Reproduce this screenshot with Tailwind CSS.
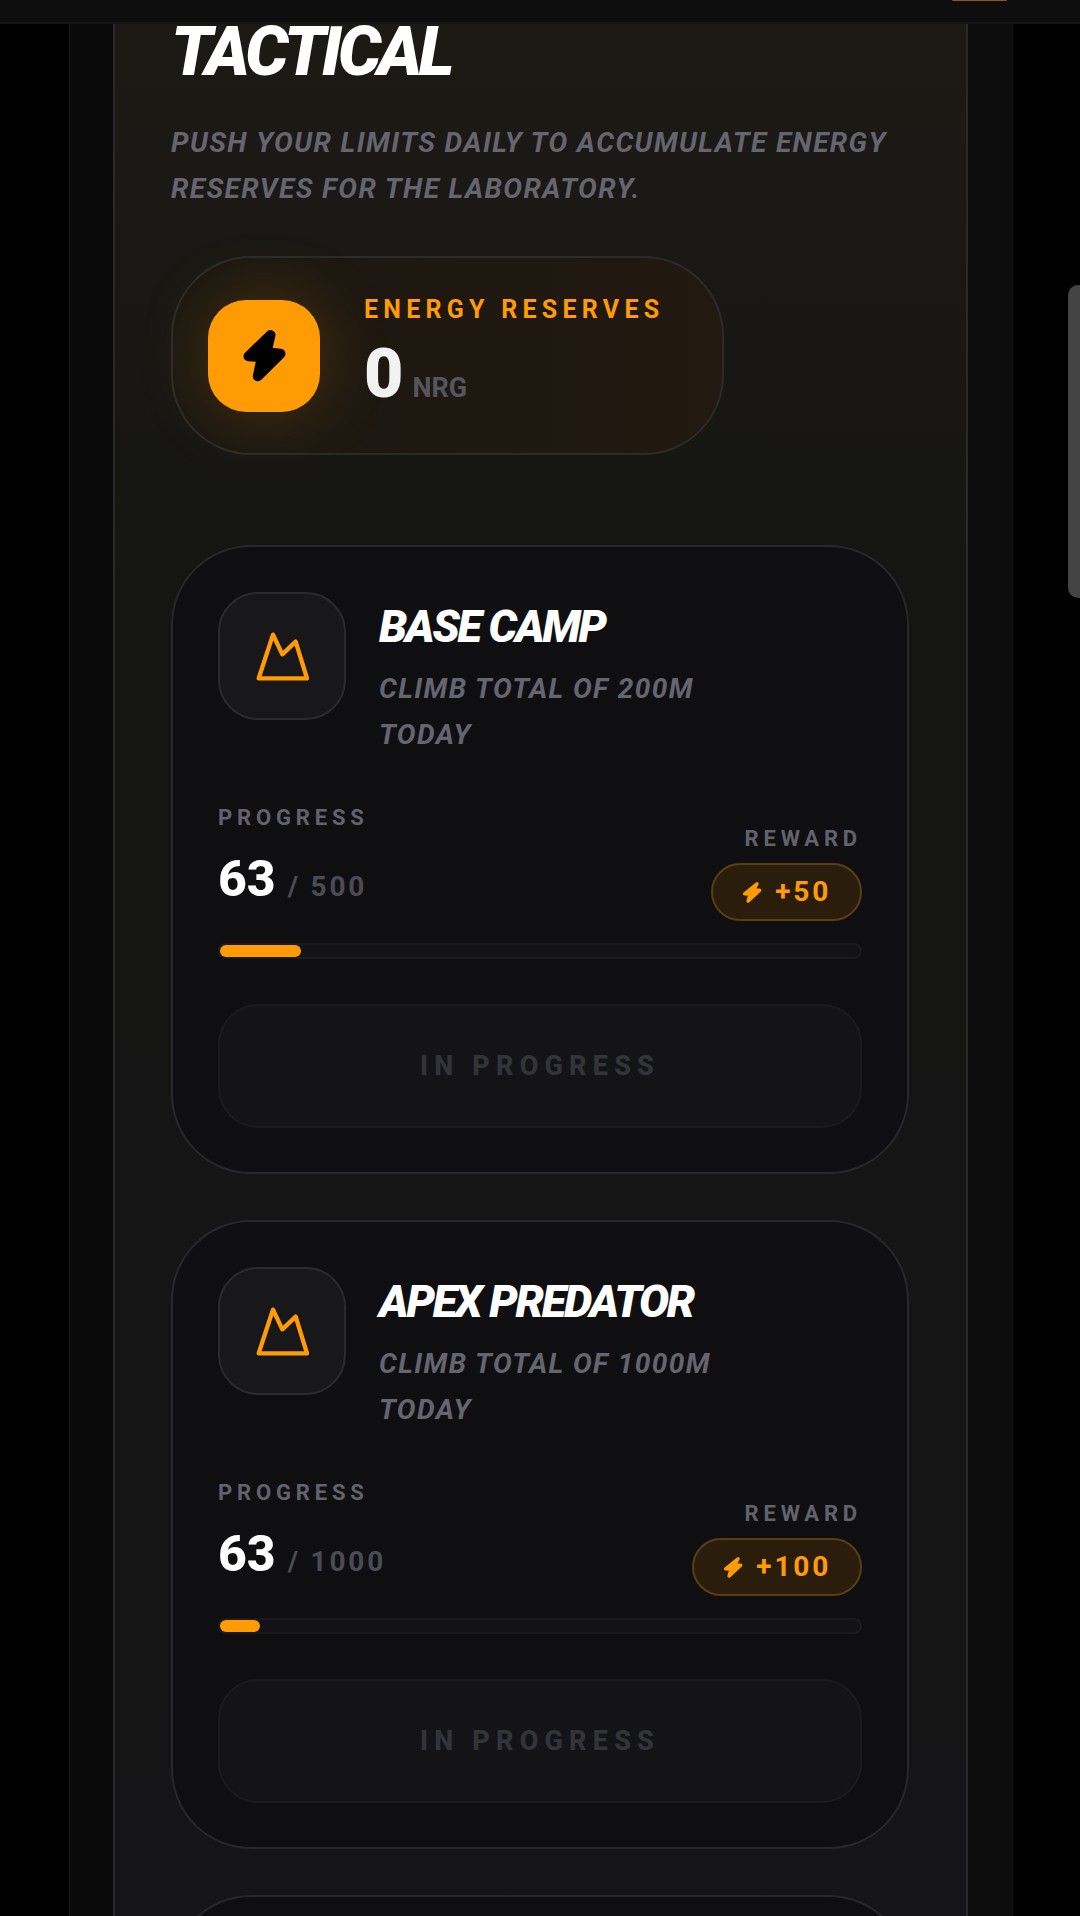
<!DOCTYPE html>
<html lang="en">
<head>
  <meta charset="UTF-8" />
  <meta name="viewport" content="width=device-width, initial-scale=1.0" />
  <title>Tactical</title>
  <script src="https://cdn.jsdelivr.net/npm/@tailwindcss/browser@4"></script>
</head>
<body class="bg-black h-[1916px] overflow-hidden font-['Roboto',sans-serif]">
  <!-- top bar -->
  <div class="relative h-[24px] bg-[#0e0e0e] border-b-2 border-[#161616]">
    <div class="absolute left-[952px] top-0 w-[55px] h-[1px] bg-[#8a5a14] rounded-b-full"></div>
  </div>

  <!-- side handle -->
  <div class="fixed right-0 top-[285px] w-[12px] h-[313px] bg-[#444444] rounded-l-[10px]"></div>

  <div class="w-[944px] ml-[69px] border-x border-[#161618] bg-gradient-to-r from-[#0a0a0b] to-[#0d0d0e] pl-[43px] pr-[44px]">
    <div class="w-[855px] h-[1892px] border-x-2 border-[#2a2a2c] bg-gradient-to-b from-[#1c1a15] via-[#151513] via-30% to-[#151517] pl-[56px]">

      <h1 class="text-[68px] leading-[50px] font-black italic text-white tracking-[-0.055em] pt-[3px]">TACTICAL</h1>
      <p class="mt-[43px] text-[28px] leading-[46px] font-bold italic text-[#65656f] tracking-[0.05em] w-[740px]">PUSH YOUR LIMITS DAILY TO ACCUMULATE ENERGY RESERVES FOR THE LABORATORY.</p>

      <!-- energy -->
      <div class="mt-[44px] w-[553px] h-[199px] rounded-[80px] border-2 border-[#2b2b2b] bg-gradient-to-r from-[#1a1711] to-[#221910] flex items-center pl-[35px]">
        <div class="w-[112px] h-[112px] rounded-[38px] bg-[#ff9c05] shadow-[0_0_70px_rgba(255,156,5,0.22)] flex items-center justify-center">
          <svg width="47" height="55" viewBox="150 145 140 165"><path d="M238 166 L172 230 L212 232 L200 290 L268 222 L226 218 Z" fill="#000" stroke="#000" stroke-width="30" stroke-linejoin="round"/></svg>
        </div>
        <div class="ml-[44px] pb-[8px]">
          <div class="text-[25px] leading-[32px] font-bold text-[#ff9c05] tracking-[0.21em]">ENERGY RESERVES</div>
          <div class="flex items-baseline mt-[12px]">
            <span class="text-[68px] leading-[72px] font-black text-[#f2f2f2]">0</span>
            <span class="ml-[9px] text-[27px] font-bold text-[#55555f]">NRG</span>
          </div>
        </div>
      </div>

      <!-- base camp -->
      <div class="mt-[90px] w-[738px] h-[629px] rounded-[80px] border-2 border-[#28282a] bg-[#0f0f11] px-[45px] pt-[45px]">
        <div class="flex">
          <div class="w-[128px] h-[128px] shrink-0 rounded-[40px] border-2 border-[#2b2b2d] bg-[#18181a] flex items-center justify-center">
            <svg class="mt-[2px]" width="56" height="52" viewBox="130 140 168 156"><path d="M144 282 L187 151 L215 210 L255 172 L289 282 Z" fill="none" stroke="#ff9c05" stroke-width="13" stroke-linejoin="round"/></svg>
          </div>
          <div class="ml-[33px]">
            <h2 class="text-[45px] leading-[50px] mt-[10px] font-black italic text-white tracking-[-0.05em]">BASE CAMP</h2>
            <p class="mt-[14px] w-[340px] text-[28px] leading-[46px] font-bold italic text-[#65656f] tracking-[0.05em]">CLIMB TOTAL OF 200M TODAY</p>
          </div>
        </div>
        <div class="flex justify-between items-end mt-[46px]">
          <div class="mb-[13px]">
            <div class="text-[22px] leading-[28px] font-bold text-[#62626c] tracking-[0.22em]">PROGRESS</div>
            <div class="flex items-baseline mt-[19px]">
              <span class="text-[50px] leading-[56px] font-extrabold text-white">63</span>
              <span class="ml-[12px] text-[28px] font-bold text-[#4b4b55] tracking-[0.1em]">/ 500</span>
            </div>
          </div>
          <div class="flex flex-col items-end">
            <div class="text-[22px] leading-[28px] font-bold text-[#62626c] tracking-[0.22em]">REWARD</div>
            <div class="mt-[10px] h-[58px] px-[29px] rounded-full border-2 border-[#5a3e12] bg-[#2a1d0c] flex items-center gap-[13px]">
              <svg width="20" height="23" viewBox="190 92 60 68"><path d="M235 100 L198 130 L214 131 L208 152 L243 119 L226 118 Z" fill="#ff9c05" stroke="#ff9c05" stroke-width="10" stroke-linejoin="round"/></svg>
              <span class="text-[28px] font-bold text-[#ff9c05] tracking-[0.1em]">+50</span>
            </div>
          </div>
        </div>
        <div class="mt-[22px] h-[16px] rounded-full border-2 border-[#1b1b1d] bg-[#131315]">
          <div class="h-full w-[12.6%] rounded-full bg-[#ff9c05]"></div>
        </div>
        <div class="mt-[45px] h-[124px] rounded-[40px] border-2 border-[#1b1b1e] bg-[#141417] flex items-center justify-center text-[27px] font-extrabold text-[#33333a] tracking-[0.23em]">IN PROGRESS</div>
      </div>

      <!-- apex predator -->
      <div class="mt-[46px] w-[738px] h-[629px] rounded-[80px] border-2 border-[#28282a] bg-[#0f0f11] px-[45px] pt-[45px]">
        <div class="flex">
          <div class="w-[128px] h-[128px] shrink-0 rounded-[40px] border-2 border-[#2b2b2d] bg-[#18181a] flex items-center justify-center">
            <svg class="mt-[2px]" width="56" height="52" viewBox="130 140 168 156"><path d="M144 282 L187 151 L215 210 L255 172 L289 282 Z" fill="none" stroke="#ff9c05" stroke-width="13" stroke-linejoin="round"/></svg>
          </div>
          <div class="ml-[33px]">
            <h2 class="text-[45px] leading-[50px] mt-[10px] font-black italic text-white tracking-[-0.05em]">APEX PREDATOR</h2>
            <p class="mt-[14px] w-[340px] text-[28px] leading-[46px] font-bold italic text-[#65656f] tracking-[0.05em]">CLIMB TOTAL OF 1000M TODAY</p>
          </div>
        </div>
        <div class="flex justify-between items-end mt-[46px]">
          <div class="mb-[13px]">
            <div class="text-[22px] leading-[28px] font-bold text-[#62626c] tracking-[0.22em]">PROGRESS</div>
            <div class="flex items-baseline mt-[19px]">
              <span class="text-[50px] leading-[56px] font-extrabold text-white">63</span>
              <span class="ml-[12px] text-[28px] font-bold text-[#4b4b55] tracking-[0.1em]">/ 1000</span>
            </div>
          </div>
          <div class="flex flex-col items-end">
            <div class="text-[22px] leading-[28px] font-bold text-[#62626c] tracking-[0.22em]">REWARD</div>
            <div class="mt-[10px] h-[58px] px-[29px] rounded-full border-2 border-[#5a3e12] bg-[#2a1d0c] flex items-center gap-[13px]">
              <svg width="20" height="23" viewBox="190 92 60 68"><path d="M235 100 L198 130 L214 131 L208 152 L243 119 L226 118 Z" fill="#ff9c05" stroke="#ff9c05" stroke-width="10" stroke-linejoin="round"/></svg>
              <span class="text-[28px] font-bold text-[#ff9c05] tracking-[0.1em]">+100</span>
            </div>
          </div>
        </div>
        <div class="mt-[22px] h-[16px] rounded-full border-2 border-[#1b1b1d] bg-[#131315]">
          <div class="h-full w-[6.3%] rounded-full bg-[#ff9c05]"></div>
        </div>
        <div class="mt-[45px] h-[124px] rounded-[40px] border-2 border-[#1b1b1e] bg-[#141417] flex items-center justify-center text-[27px] font-extrabold text-[#33333a] tracking-[0.23em]">IN PROGRESS</div>
      </div>

      <!-- next card, cut off by the window -->
      <div class="mt-[46px] w-[738px] h-[100px] rounded-t-[80px] border-2 border-b-0 border-[#28282a] bg-[#0f0f11]"></div>
    </div>
  </div>
</body>
</html>
